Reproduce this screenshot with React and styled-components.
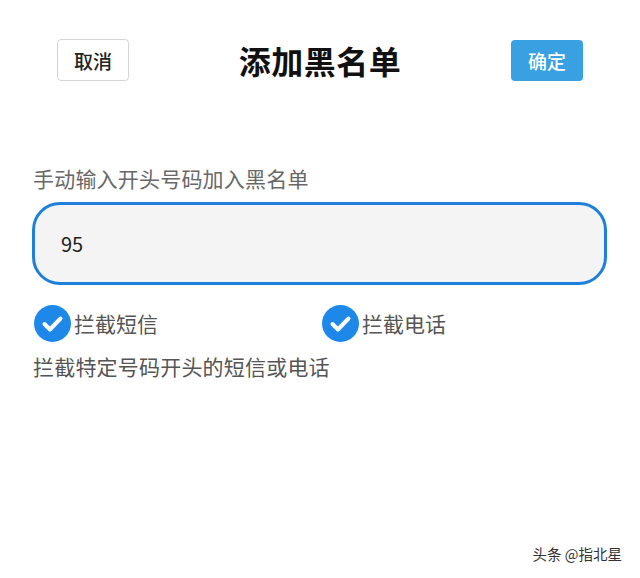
import React from "react";
import styled, { createGlobalStyle } from "styled-components";

const Global = createGlobalStyle`
  html, body { margin: 0; padding: 0; background: #fff; }
  body { font-family: "Noto Sans CJK SC", "Noto Sans", sans-serif; }
`;

const Page = styled.div`
  position: relative;
  width: 640px;
  height: 578px;
  background: #fff;
  overflow: hidden;
`;

const Header = styled.div`
  display: flex;
  align-items: center;
  justify-content: space-between;
  padding: 39px 57px 0 57px;
  height: 42px;
`;

const Button = styled.button`
  box-sizing: border-box;
  width: 72px;
  height: ${(p) => (p.$primary ? 41 : 42)}px;
  border-radius: 4px;
  font-family: inherit;
  font-size: 19px;
  font-weight: 500;
  padding: 0;
  display: flex;
  align-items: center;
  justify-content: center;
  line-height: 1;
  background: ${(p) => (p.$primary ? "#39a0e1" : "#fff")};
  color: ${(p) => (p.$primary ? "#fff" : "#222")};
  border: ${(p) => (p.$primary ? "none" : "1px solid #d4d4d4")};
`;

const Title = styled.h1`
  margin: 0;
  font-size: 32px;
  font-weight: 700;
  color: #111;
  letter-spacing: 0.5px;
  line-height: 42px;
`;

const Body = styled.div`
  padding: 83px 32px 0 32px;
  display: flex;
  flex-direction: column;
`;

const Label = styled.div`
  padding-left: 1px;
  font-size: 21px;
  line-height: 29px;
  color: #686868;
  letter-spacing: 0.2px;
`;

const InputBox = styled.div`
  box-sizing: border-box;
  margin-top: 9px;
  width: 575px;
  height: 83px;
  border: 3px solid #1f80dc;
  border-radius: 28px;
  background: #f4f4f4;
  display: flex;
  align-items: center;
  padding-left: 26px;
  font-size: 20px;
  color: #222;
`;

const Options = styled.div`
  display: grid;
  grid-template-columns: 288px 288px;
  margin-top: 20px;
  padding-left: 2px;
`;

const Option = styled.div`
  display: flex;
  align-items: center;
  gap: 3px;
  height: 37px;
`;

const OptionText = styled.span`
  font-size: 21px;
  color: #555;
  line-height: 1;
`;

const Hint = styled.div`
  margin-top: 10px;
  padding-left: 1px;
  font-size: 21px;
  line-height: 28px;
  color: #555;
  letter-spacing: 0.2px;
`;

const Watermark = styled.div`
  position: absolute;
  right: 18px;
  bottom: 14px;
  font-size: 14.5px;
  color: #333;
  text-shadow: 1px 1px 0 #fff, -1px -1px 0 #fff, 0 0 2px #fff;
`;

const Check = () => (
  <svg width="37" height="37" viewBox="0 0 37 37">
    <circle cx="18.5" cy="18.5" r="18.5" fill="#1e88e8" />
    <path
      d="M10.5 19 L16 24.5 L26.5 13.5"
      fill="none"
      stroke="#fff"
      strokeWidth="4"
      strokeLinecap="round"
      strokeLinejoin="round"
    />
  </svg>
);

export default function App() {
  return (
    <Page>
      <Global />
      <Header>
        <Button>取消</Button>
        <Title>添加黑名单</Title>
        <Button $primary>确定</Button>
      </Header>
      <Body>
        <Label>手动输入开头号码加入黑名单</Label>
        <InputBox>95</InputBox>
        <Options>
          <Option>
            <Check />
            <OptionText>拦截短信</OptionText>
          </Option>
          <Option>
            <Check />
            <OptionText>拦截电话</OptionText>
          </Option>
        </Options>
        <Hint>拦截特定号码开头的短信或电话</Hint>
      </Body>
      <Watermark>头条 @指北星</Watermark>
    </Page>
  );
}
